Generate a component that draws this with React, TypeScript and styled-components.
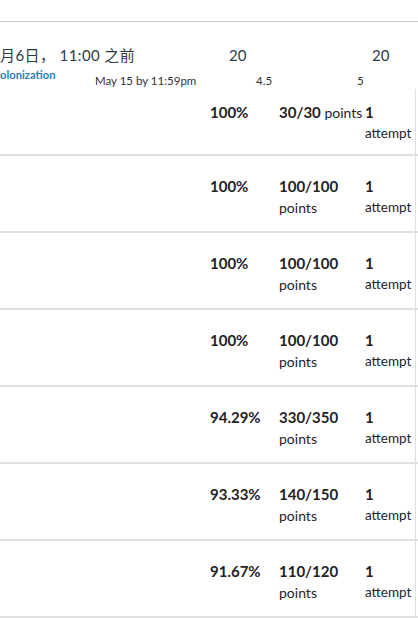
import React from 'react';
import styled, { createGlobalStyle } from 'styled-components';

const GlobalStyle = createGlobalStyle`
  html, body {
    margin: 0;
    padding: 0;
    background: #fff;
    overflow: hidden;
  }
  body {
    font-family: Lato, "Noto Sans CJK SC", sans-serif;
    color: #2d3b45;
  }
`;

const grades = [
  { pct: '100%', score: '30/30', attempts: 1 },
  { pct: '100%', score: '100/100', attempts: 1 },
  { pct: '100%', score: '100/100', attempts: 1 },
  { pct: '100%', score: '100/100', attempts: 1 },
  { pct: '94.29%', score: '330/350', attempts: 1 },
  { pct: '93.33%', score: '140/150', attempts: 1 },
  { pct: '91.67%', score: '110/120', attempts: 1 },
];

const Page = styled.div`
  width: 418px;
`;

const TopBar = styled.div`
  height: 21px;
  border-bottom: 1px solid #c9c9c9;
`;

const Header = styled.div`
  box-sizing: border-box;
  height: 67px;
  padding-top: 23px;
`;

const HeaderMain = styled.div`
  display: grid;
  grid-template-columns: 229px 143px 1fr;
  font-size: 15px;
  line-height: 20px;
  color: #2d3b45;
  white-space: nowrap;
`;

const DueText = styled.span`
  letter-spacing: 0.4px;
`;

const HeaderSub = styled.div`
  display: grid;
  grid-template-columns: 95px 161px 101px 1fr;
  align-items: start;
  margin-top: 3px;
  white-space: nowrap;
`;

const CourseLink = styled.span`
  font-size: 11.2px;
  font-weight: 700;
  line-height: 14px;
  color: #2b7bb9;
`;

const Meta = styled.span`
  font-size: 11.5px;
  line-height: 14px;
  margin-top: 6px;
  color: #333;
`;

const Row = styled.div<{ $first?: boolean }>`
  box-sizing: border-box;
  height: ${(p) => (p.$first ? 67 : 77)}px;
  display: grid;
  grid-template-columns: 210px 69px 86px 51px 1fr;
  border-bottom: 2px solid #e0e0e0;
`;

const Spacer = styled.div``;

const Cell = styled.div<{ $first?: boolean }>`
  padding-top: ${(p) => (p.$first ? 13 : 20)}px;
  font-size: 15px;
  line-height: 20px;
  color: #1f2226;
`;

const Pct = styled(Cell)`
  font-weight: 700;
`;

const Points = styled(Cell)`
  font-size: 14px;
  line-height: 21px;
  b {
    font-size: 15px;
    font-weight: 700;
  }
`;

const Attempts = styled(Cell)`
  border-right: 1px solid #e0e0e0;
  line-height: 20px;
  font-size: 13.5px;
  b {
    font-size: 15px;
    font-weight: 700;
  }
`;

export default function App() {
  return (
    <Page>
      <GlobalStyle />
      <TopBar />
      <Header>
        <HeaderMain>
          <DueText>月6日， 11:00 之前</DueText>
          <span>20</span>
          <span>20</span>
        </HeaderMain>
        <HeaderSub>
          <CourseLink>olonization</CourseLink>
          <Meta>May 15 by 11:59pm</Meta>
          <Meta>4.5</Meta>
          <Meta>5</Meta>
        </HeaderSub>
      </Header>
      {grades.map((g, i) => (
        <Row key={i} $first={i === 0}>
          <Spacer />
          <Pct $first={i === 0}>{g.pct}</Pct>
          <Points $first={i === 0}>
            <b>{g.score}</b> points
          </Points>
          <Attempts $first={i === 0}>
            <b>{g.attempts}</b> attempt
          </Attempts>
        </Row>
      ))}
    </Page>
  );
}
